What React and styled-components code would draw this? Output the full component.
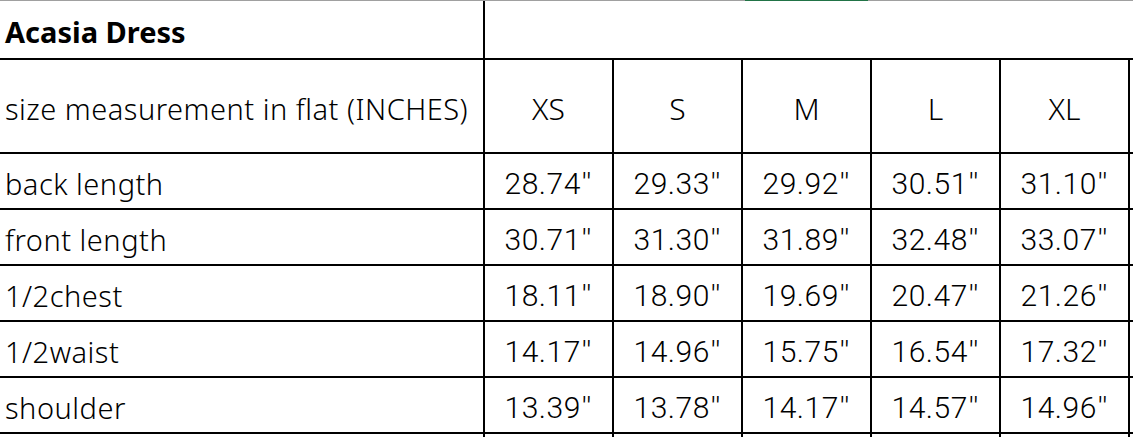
import React from 'react';
import styled, { createGlobalStyle } from 'styled-components';

const GlobalStyle = createGlobalStyle`
  html, body {
    margin: 0;
    padding: 0;
    background: #fff;
  }
  body {
    overflow: hidden;
    color: #000;
  }
`;

const Page = styled.div`
  width: 1133px;
  height: 437px;
  overflow: hidden;
  background: #fff;
`;

const TopRule = styled.div`
  display: flex;
  height: 1px;
  background: #a0a0a0;
`;

const RuleMark = styled.div`
  margin-left: 745px;
  width: 123px;
  height: 1px;
  background: #217346;
`;

const Sheet = styled.div`
  display: grid;
  grid-template-columns: 485px repeat(5, 129px) 1fr;
  grid-auto-rows: 56px;
  grid-template-rows: 59px 94px;
`;

const Cell = styled.div`
  box-sizing: border-box;
  display: flex;
  align-items: center;
  justify-content: ${p => (p.center ? 'center' : 'flex-start')};
  padding: 5px 0 0 ${p => (p.center ? '0' : '5px')};
  border-bottom: 2px solid #000;
  border-right: ${p => (p.open ? 'none' : '2px solid #000')};
  grid-column: ${p => p.span || 'auto'};
  white-space: nowrap;
  color: #000;
`;

const Title = styled(Cell)`
  font-family: 'Noto Sans', 'Noto Sans CJK SC', sans-serif;
  font-weight: 700;
  font-size: 29px;
  padding-top: 3px;
`;

const Label = styled(Cell)`
  font-family: 'Noto Sans', 'Noto Sans CJK SC', sans-serif;
  font-weight: 300;
  font-size: 29px;
  letter-spacing: 0.5px;
`;

const SizeHead = styled(Cell)`
  font-family: 'Noto Sans', 'Noto Sans CJK SC', sans-serif;
  font-weight: 300;
  font-size: 30px;
`;

const Value = styled(Cell)`
  font-family: Roboto, 'Liberation Sans', Arial, sans-serif;
  font-weight: 300;
  font-size: 30px;
  letter-spacing: 0.5px;
`;

const Tick = styled.span`
  margin-left: 1px;
  letter-spacing: 1px;
`;

const Spare = styled.div`
  box-sizing: border-box;
  border-bottom: 2px solid #000;
`;

const sizes = ['XS', 'S', 'M', 'L', 'XL'];

const rows = [
  { label: 'back length', values: ['28.74', '29.33', '29.92', '30.51', '31.10'] },
  { label: 'front length', values: ['30.71', '31.30', '31.89', '32.48', '33.07'] },
  { label: '1/2chest', values: ['18.11', '18.90', '19.69', '20.47', '21.26'] },
  { label: '1/2waist', values: ['14.17', '14.96', '15.75', '16.54', '17.32'] },
  { label: 'shoulder', values: ['13.39', '13.78', '14.17', '14.57', '14.96'] },
];

export default function App() {
  return (
    <Page>
      <GlobalStyle />
      <TopRule>
        <RuleMark />
      </TopRule>
      <Sheet>
        <Title>Acasia Dress</Title>
        <Cell open span="2 / 8" />

        <Label>size measurement in flat (INCHES)</Label>
        {sizes.map(size => (
          <SizeHead key={size} center>{size}</SizeHead>
        ))}
        <Spare />

        {rows.map(row => (
          <React.Fragment key={row.label}>
            <Label>{row.label}</Label>
            {row.values.map((v, i) => (
              <Value key={i} center>{v}<Tick>''</Tick></Value>
            ))}
            <Spare />
          </React.Fragment>
        ))}

        <Label />
        {sizes.map(size => (
          <Value key={size} center />
        ))}
        <Spare />
      </Sheet>
    </Page>
  );
}
